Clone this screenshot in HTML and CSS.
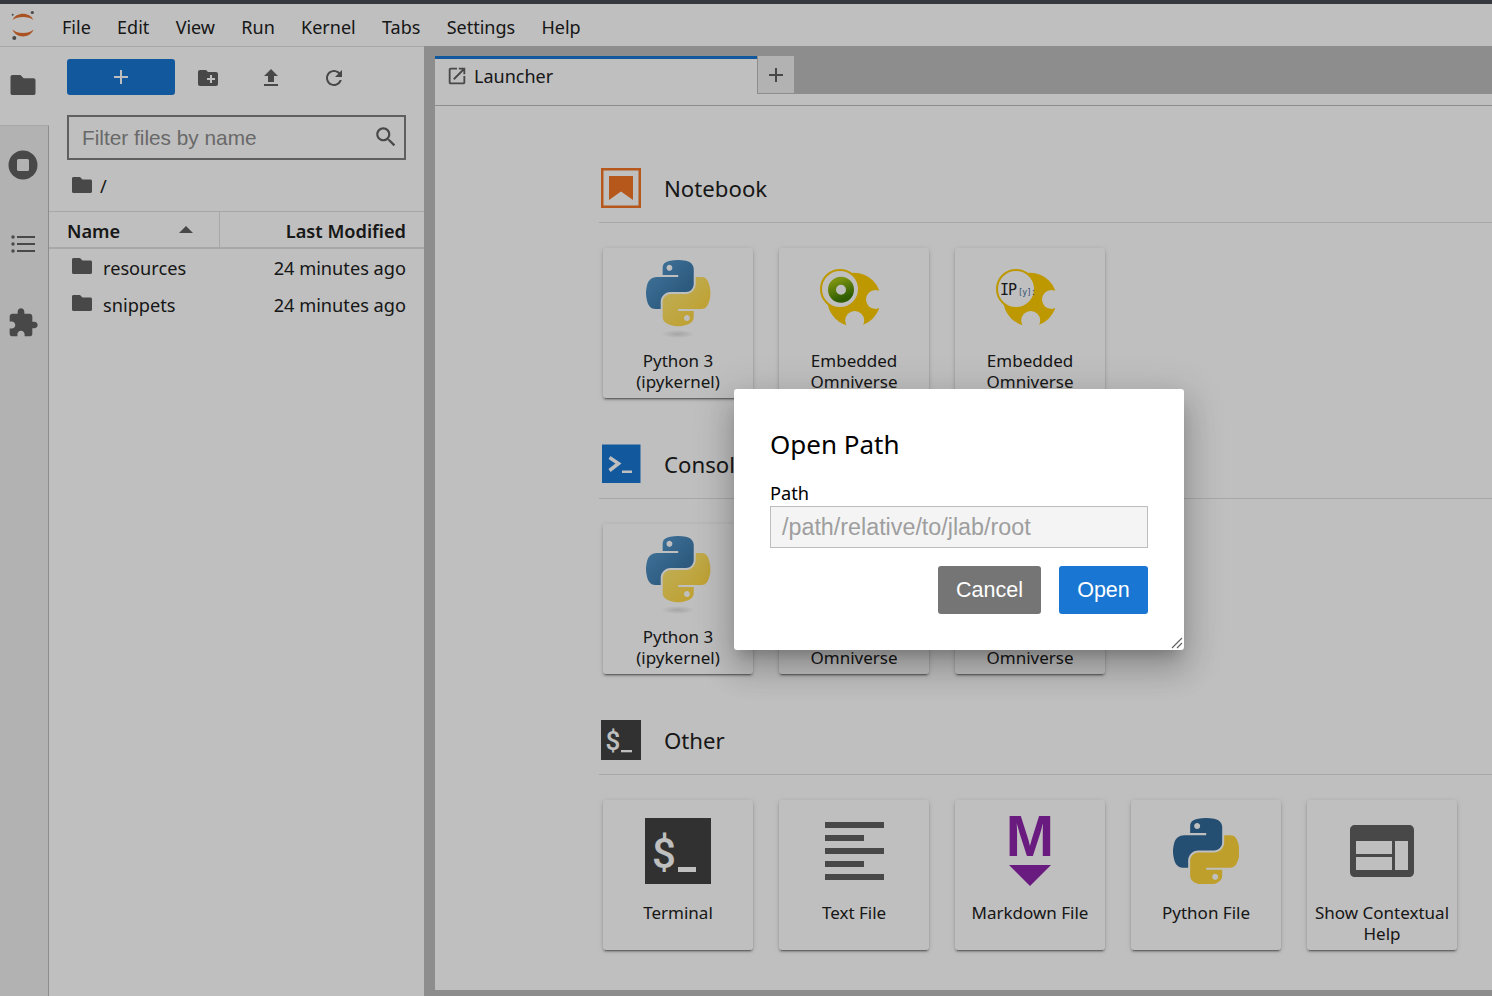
FILE: index.html
```html
<!DOCTYPE html>
<html lang="en">
<head>
<meta charset="utf-8">
<title>JupyterLab</title>
<link rel="stylesheet" href="styles.css">
</head>
<body>
<svg class="defs" aria-hidden="true">
  <defs>
    <linearGradient id="pyBlue" x1="0" y1="0" x2="1" y2="1"><stop offset="0" stop-color="#5a9fd4"/><stop offset="1" stop-color="#306998"/></linearGradient>
    <linearGradient id="pyYellow" x1="0.9" y1="0.9" x2="0.2" y2="0.1"><stop offset="0" stop-color="#ffd43b"/><stop offset="1" stop-color="#ffe873"/></linearGradient>
    <radialGradient id="pyShadow"><stop offset="0" stop-color="#dcdcdc"/><stop offset="1" stop-color="#fff"/></radialGradient>
    <linearGradient id="kitGreen" x1="0.2" y1="0" x2="0.6" y2="1"><stop offset="0" stop-color="#a4c416"/><stop offset="1" stop-color="#3f7d00"/></linearGradient>
    <symbol id="i-folder" viewBox="0 0 24 24"><path d="M10 4H3.500C2.700 4 2 4.700 2 5.500v13C2 19.300 2.700 20 3.500 20h17c.8 0 1.500-.7 1.500-1.500V8c0-.8-.7-1.500-1.500-1.500H12.500L10 4z"/></symbol>
    <symbol id="i-newfolder" viewBox="0 0 24 24"><path d="M20 6h-8l-2-2H4c-1.110 0-1.990.89-1.990 2L2 18c0 1.110.89 2 2 2h16c1.110 0 2-.89 2-2V8c0-1.110-.89-2-2-2zm-1 8h-3v3h-2v-3h-3v-2h3V9h2v3h3v2z"/></symbol>
    <symbol id="i-upload" viewBox="0 0 24 24"><path d="M9 16h6v-6h4l-7-7-7 7h4zm-4 2h14v2H5z"/></symbol>
    <symbol id="i-refresh" viewBox="0 0 24 24"><path d="M17.650 6.350C16.200 4.900 14.210 4 12 4c-4.420 0-7.990 3.580-7.990 8s3.570 8 7.990 8c3.730 0 6.840-2.550 7.730-6h-2.080c-.82 2.330-3.040 4-5.650 4-3.310 0-6-2.690-6-6s2.690-6 6-6c1.660 0 3.140.69 4.220 1.780L13 11h7V4l-2.350 2.350z"/></symbol>
    <symbol id="i-python" viewBox="0 0 110.400 110.400">
      <path fill="currentColor" d="M54.919 0C50.335.022 45.958.413 42.106 1.095 30.760 3.099 28.700 7.295 28.700 15.032v10.219h26.813v3.406H18.637c-7.792 0-14.616 4.684-16.750 13.594-2.462 10.213-2.571 16.586 0 27.250 1.906 7.938 6.458 13.594 14.250 13.594h9.219v-12.250c0-8.850 7.657-16.656 16.750-16.656h26.781c7.455 0 13.406-6.138 13.406-13.625V15.032c0-7.266-6.130-12.725-13.406-13.938C64.282.328 59.502-.020 54.919 0zm-14.500 8.220c2.770 0 5.031 2.299 5.031 5.125 0 2.816-2.261 5.094-5.031 5.094-2.779 0-5.031-2.278-5.031-5.094 0-2.826 2.252-5.125 5.031-5.125z"/>
      <path fill="var(--py2)" d="M85.638 28.657v11.906c0 9.231-7.826 17-16.750 17H42.107c-7.336 0-13.406 6.278-13.406 13.625v25.531c0 7.266 6.319 11.540 13.406 13.625 8.487 2.496 16.626 2.947 26.781 0 6.750-1.954 13.406-5.888 13.406-13.625V86.501H55.513v-3.406h40.188c7.792 0 10.696-5.435 13.406-13.594 2.799-8.399 2.740-16.476 0-27.250-1.926-7.757-5.604-13.594-13.406-13.594zM70.575 93.313c2.779 0 5.031 2.277 5.031 5.094 0 2.826-2.252 5.125-5.031 5.125-2.770 0-5.031-2.299-5.031-5.125 0-2.817 2.261-5.094 5.031-5.094z"/>
    </symbol>
    <symbol id="i-pykernel" viewBox="0 0 78 84">
      <ellipse cx="39" cy="74" rx="17" ry="4" fill="url(#pyShadow)"/>
      <g transform="translate(7 0) scale(.58 .59)">
        <path fill="url(#pyBlue)" d="M54.919 0C50.335.022 45.958.413 42.106 1.095 30.760 3.099 28.700 7.295 28.700 15.032v10.219h26.813v3.406H18.637c-7.792 0-14.616 4.684-16.750 13.594-2.462 10.213-2.571 16.586 0 27.250 1.906 7.938 6.458 13.594 14.250 13.594h9.219v-12.250c0-8.850 7.657-16.656 16.750-16.656h26.781c7.455 0 13.406-6.138 13.406-13.625V15.032c0-7.266-6.130-12.725-13.406-13.938C64.282.328 59.502-.020 54.919 0zm-14.500 8.220c2.770 0 5.031 2.299 5.031 5.125 0 2.816-2.261 5.094-5.031 5.094-2.779 0-5.031-2.278-5.031-5.094 0-2.826 2.252-5.125 5.031-5.125z"/>
        <path fill="url(#pyYellow)" d="M85.638 28.657v11.906c0 9.231-7.826 17-16.750 17H42.107c-7.336 0-13.406 6.278-13.406 13.625v25.531c0 7.266 6.319 11.540 13.406 13.625 8.487 2.496 16.626 2.947 26.781 0 6.750-1.954 13.406-5.888 13.406-13.625V86.501H55.513v-3.406h40.188c7.792 0 10.696-5.435 13.406-13.594 2.799-8.399 2.740-16.476 0-27.250-1.926-7.757-5.604-13.594-13.406-13.594zM70.575 93.313c2.779 0 5.031 2.277 5.031 5.094 0 2.826-2.252 5.125-5.031 5.125-2.770 0-5.031-2.299-5.031-5.125 0-2.817 2.261-5.094 5.031-5.094z"/>
      </g>
    </symbol>
    <symbol id="i-goldbase" viewBox="0 0 78 84">
      <circle cx="39" cy="39.500" r="26.700" fill="#fdcb00"/>
      <circle cx="60.500" cy="39.500" r="9.500" fill="#fff"/>
      <circle cx="39.700" cy="60.500" r="9.500" fill="#fff"/>
      <circle cx="25" cy="29" r="19" fill="#fff" stroke="#fdcb00" stroke-width="2"/>
    </symbol>
  </defs>
</svg>

<div class="app">
  <div class="topline"></div>
  <header class="menubar">
    <svg class="jp-logo" viewBox="0 0 26 30" width="26" height="30">
      <path fill="#e46e2e" d="M2.500 10C6 1.500 20 1.500 23.500 10 19 6 7 6 2.500 10zM2.500 19.500C6 28.800 20 28.800 23.500 19.500 19 24.200 7 24.200 2.500 19.500z"/>
      <circle cx="2.700" cy="4.800" r="1" fill="#616161"/><circle cx="22.300" cy="2.500" r="1.600" fill="#616161"/><circle cx="4.300" cy="28" r="2" fill="#616161"/>
    </svg>
    <nav class="menu">
      <span>File</span><span>Edit</span><span>View</span><span>Run</span><span>Kernel</span><span>Tabs</span><span>Settings</span><span>Help</span>
    </nav>
  </header>

  <div class="main">
    <aside class="sidetabs">
      <div class="stab active"><svg class="ic34"><use href="#i-folder"/></svg></div>
      <div class="stab">
        <svg viewBox="0 0 30 30" width="30" height="30"><circle cx="15" cy="15" r="14.500" fill="#616161"/><rect x="9" y="9" width="12" height="12" rx="1.500" fill="#eee"/></svg>
      </div>
      <div class="stab">
        <svg viewBox="0 0 24 20" width="24" height="20" fill="#616161"><circle cx="2" cy="3" r="1.700"/><circle cx="2" cy="10" r="1.700"/><circle cx="2" cy="17" r="1.700"/><rect x="6" y="2" width="18" height="2"/><rect x="6" y="9" width="18" height="2"/><rect x="6" y="16" width="18" height="2"/></svg>
      </div>
      <div class="stab">
        <svg viewBox="0 0 24 24" width="32" height="32" fill="#616161"><path d="M20.500 11H19V7c0-1.100-.9-2-2-2h-4V3.500C13 2.120 11.880 1 10.500 1S8 2.120 8 3.500V5H4c-1.100 0-1.990.9-1.990 2v3.800H3.500c1.490 0 2.700 1.210 2.700 2.700s-1.210 2.700-2.700 2.700H2V20c0 1.100.9 2 2 2h3.800v-1.500c0-1.490 1.210-2.700 2.700-2.700 1.490 0 2.700 1.210 2.700 2.700V22H17c1.100 0 2-.9 2-2v-4h1.500c1.380 0 2.500-1.120 2.500-2.500S21.880 11 20.500 11z"/></svg>
      </div>
    </aside>

    <section class="browser">
      <div class="toolbar">
        <button class="newbtn" type="button">
          <svg viewBox="0 0 16 16" width="16" height="16"><path d="M7 1h2v6h6v2H9v6H7V9H1V7h6z" fill="#fff"/></svg>
        </button>
        <svg class="tool"><use href="#i-newfolder"/></svg>
        <svg class="tool"><use href="#i-upload"/></svg>
        <svg class="tool"><use href="#i-refresh"/></svg>
      </div>
      <div class="filter">
        <span class="filter-text">Filter files by name</span>
        <svg class="filter-ic" viewBox="0 0 24 24" width="26" height="26" fill="#616161"><path d="M15.500 14h-.79l-.28-.27C15.410 12.590 16 11.110 16 9.500 16 5.910 13.090 3 9.500 3S3 5.910 3 9.500 5.910 16 9.500 16c1.610 0 3.090-.59 4.230-1.570l.27.28v.79l5 4.990L20.490 19l-4.990-5zm-6 0C7.010 14 5 11.990 5 9.500S7.010 5 9.500 5 14 7.010 14 9.500 11.990 14 9.500 14z"/></svg>
      </div>
      <div class="crumbs"><svg class="fold"><use href="#i-folder"/></svg><span>/</span></div>
      <div class="thead">
        <div class="th-name"><span>Name</span><i class="caret"></i></div>
        <div class="th-mod">Last Modified</div>
      </div>
      <div class="row"><svg class="fold"><use href="#i-folder"/></svg><span class="row-name">resources</span><span class="row-date">24 minutes ago</span></div>
      <div class="row"><svg class="fold"><use href="#i-folder"/></svg><span class="row-name">snippets</span><span class="row-date">24 minutes ago</span></div>
    </section>

    <div class="splitter"></div>

    <section class="area">
      <div class="tabbar">
        <div class="tab">
          <svg viewBox="0 0 24 24" width="22" height="22" fill="#616161"><path d="M19 19H5V5h7V3H5c-1.110 0-2 .9-2 2v14c0 1.100.89 2 2 2h14c1.100 0 2-.9 2-2v-7h-2v7zM14 3v2h3.590l-9.830 9.830 1.410 1.410L19 6.410V10h2V3h-7z"/></svg>
          <span>Launcher</span>
        </div>
        <div class="addtab"><svg viewBox="0 0 16 16" width="16" height="16"><path d="M7 1h2v6h6v2H9v6H7V9H1V7h6z" fill="#616161"/></svg></div>
      </div>
      <div class="launcher">
        <div class="sec">
          <div class="sec-head">
            <svg viewBox="0 0 40 40" width="40" height="40"><rect x="1.250" y="1.250" width="37.500" height="37.500" fill="none" stroke="#f37626" stroke-width="2.500"/><path d="M8 8h24v24l-12-8.500L8 32z" fill="#f37626"/></svg>
            <h2>Notebook</h2>
          </div>
          <div class="cards">
            <div class="card"><svg class="kicon"><use href="#i-pykernel"/></svg><p>Python 3<br>(ipykernel)</p></div>
            <div class="card">
              <svg class="kicon" viewBox="0 0 78 84"><use href="#i-goldbase" width="78" height="84"/><circle cx="26" cy="29.700" r="9" fill="none" stroke="url(#kitGreen)" stroke-width="8"/></svg>
              <p>Embedded<br>Omniverse</p>
            </div>
            <div class="card">
              <svg class="kicon" viewBox="0 0 78 84"><use href="#i-goldbase" width="78" height="84"/><text class="ip" x="9" y="35">IP</text><text class="ipy" x="27" y="34.500">[y]:</text></svg>
              <p>Embedded<br>Omniverse</p>
            </div>
          </div>
        </div>
        <div class="sec">
          <div class="sec-head">
            <svg viewBox="0 0 40 40" width="40" height="40"><rect x="1" y="0.500" width="38.500" height="38.500" fill="#1976d2"/><path d="M8.500 13.500l9 6-9 7" fill="none" stroke="#fff" stroke-width="3.500"/><rect x="21" y="26.500" width="10" height="2.500" fill="#fff"/></svg>
            <h2>Console</h2>
          </div>
          <div class="cards">
            <div class="card"><svg class="kicon"><use href="#i-pykernel"/></svg><p>Python 3<br>(ipykernel)</p></div>
            <div class="card">
              <svg class="kicon" viewBox="0 0 78 84"><use href="#i-goldbase" width="78" height="84"/></svg>
              <p>Embedded<br>Omniverse</p>
            </div>
            <div class="card">
              <svg class="kicon" viewBox="0 0 78 84"><use href="#i-goldbase" width="78" height="84"/></svg>
              <p>Embedded<br>Omniverse</p>
            </div>
          </div>
        </div>
        <div class="sec">
          <div class="sec-head">
            <svg viewBox="0 0 40 40" width="40" height="40"><rect width="40" height="40" fill="#424242"/><text class="dollar" x="4.500" y="30">$</text><rect x="20" y="30" width="11" height="2.300" fill="#fff"/></svg>
            <h2>Other</h2>
          </div>
          <div class="cards">
            <div class="card">
              <svg class="oicon" viewBox="0 0 66 66"><rect width="66" height="66" fill="#424242"/><text class="dollar big" x="7" y="50">$</text><rect x="33" y="49" width="18" height="5" fill="#fff"/></svg>
              <p>Terminal</p>
            </div>
            <div class="card">
              <svg class="oicon" viewBox="0 0 66 66" fill="#616161"><rect x="4" y="4" width="59" height="6"/><rect x="4" y="17" width="39" height="6"/><rect x="4" y="30" width="59" height="6"/><rect x="4" y="43" width="39" height="6"/><rect x="4" y="56" width="59" height="6"/></svg>
              <p>Text File</p>
            </div>
            <div class="card">
              <svg class="oicon" viewBox="0 0 66 66"><text class="mdm" x="33" y="38" text-anchor="middle">M</text><path d="M12 47h42L33 68z" fill="#8e24aa"/></svg>
              <p>Markdown File</p>
            </div>
            <div class="card">
              <svg class="oicon py-file"><use href="#i-python"/></svg>
              <p>Python File</p>
            </div>
            <div class="card">
              <svg class="oicon" viewBox="0 0 66 66"><path fill-rule="evenodd" fill="#616161" d="M6 7h54c3 0 5 2 5 5v42c0 3-2 5-5 5H6c-3 0-5-2-5-5V12c0-3 2-5 5-5zm1 16v13h36V23zm0 16v13h36V39zm39-16v29h13V23z"/></svg>
              <p>Show Contextual Help</p>
            </div>
          </div>
        </div>
      </div>
    </section>
  </div>
</div>

<div class="overlay"></div>
<div class="dialog">
  <h1>Open Path</h1>
  <label class="d-label">Path</label>
  <div class="d-input">/path/relative/to/jlab/root</div>
  <div class="d-actions">
    <button class="btn cancel" type="button">Cancel</button>
    <button class="btn open" type="button">Open</button>
  </div>
  <svg class="grip" viewBox="0 0 12 12" width="12" height="12"><path d="M1 11L11 1M6 11l5-5" stroke="#616161" stroke-width="1.200" fill="none"/></svg>
</div>
</body>
</html>
```

FILE: styles.css
```css
* { box-sizing: border-box; }
html, body { margin: 0; height: 100%; overflow: hidden; }
body { font-family: "Noto Sans", "Open Sans", sans-serif; color: #212121; background: #fff; }
.defs { position: absolute; width: 0; height: 0; }
p, h1, h2 { margin: 0; font-weight: 400; }

.app { display: flex; flex-direction: column; height: 996px; }
.topline { height: 4px; background: #474b55; flex: none; }
.menubar { height: 43px; flex: none; display: flex; align-items: center; background: #fff; border-bottom: 1px solid #e0e0e0; }
.jp-logo { margin-left: 10px; flex: none; }
.menu { display: flex; gap: 26.300px; margin: 3px 0 0 26px; font-size: 18px; }

.main { flex: 1; display: flex; min-height: 0; }
.sidetabs { width: 49px; flex: none; background: #eee; border-right: 1px solid #bdbdbd; }
.stab { height: 79px; display: flex; align-items: center; justify-content: center; padding: 0 3px 2px 0; }
.stab.active { background: #fff; width: 49px; margin-right: -1px; position: relative; border-bottom: 1px solid #e0e0e0; }
.ic34 { width: 30px; height: 30px; fill: #616161; }

.browser { width: 375px; flex: none; background: #fff; font-size: 18.200px; }
.toolbar { display: flex; align-items: center; padding: 12px 0 0 18px; height: 48px; }
.newbtn { width: 108px; height: 36px; border: 0; border-radius: 3px; background: #1976d2; display: flex; align-items: center; justify-content: center; padding: 0; }
.tool { width: 24px; height: 24px; fill: #616161; margin: 2px 0 0 21px; }
.tool + .tool { margin-left: 39px; }
.filter { margin: 20px 18px 0; height: 45px; border: 2px solid #7f7f7f; display: flex; align-items: center; justify-content: space-between; padding: 0 5px 0 13px; }
.filter-text { font-family: "Liberation Sans", Arial, sans-serif; font-size: 20.800px; color: #8c8c8c; }
.filter-ic { margin-top: -2px; }
.crumbs { display: flex; align-items: center; height: 51px; padding-left: 21px; }
.crumbs span { margin-left: 6px; }
.crumbs .fold { margin-top: -2px; }
.fold { width: 24px; height: 24px; fill: #616161; flex: none; }
.thead { display: flex; height: 38px; border-top: 1px solid #e0e0e0; border-bottom: 2px solid #e0e0e0; font-weight: 600; }
.th-name { width: 171px; padding: 3px 26px 0 18px; border-right: 1px solid #e0e0e0; display: flex; align-items: center; justify-content: space-between; }
.caret { width: 0; height: 0; border: 7px solid transparent; border-bottom: 7px solid #616161; border-top: 0; margin-top: -4px; }
.th-mod { flex: 1; display: flex; align-items: center; justify-content: flex-end; padding: 3px 18px 0 0; }
.row { display: flex; align-items: center; height: 37px; padding: 0 18px 0 21px; }
.row .fold { margin-top: -3px; }
.row-name { margin-left: 9px; flex: 1; }

.splitter { width: 11px; flex: none; background: #bdbdbd; margin-top: -1px; }
.area { flex: 1; display: flex; flex-direction: column; min-width: 0; background: #bdbdbd; padding-bottom: 6px; margin-top: -1px; }
.tabbar { height: 60px; flex: none; display: flex; align-items: flex-start; padding-top: 10px; background: linear-gradient(#bdbdbd 48px, #fff 48px); border-bottom: 1px solid #bdbdbd; }
.tab { width: 322px; height: 49px; background: #fff; border-top: 3px solid #1976d2; display: flex; align-items: center; padding: 0 0 13px 11px; font-size: 18px; gap: 6px; }
.addtab { width: 37px; height: 38px; background: #eee; border-left: 1px solid #bdbdbd; border-bottom: 1px solid #bdbdbd; display: flex; align-items: center; justify-content: center; }

.launcher { flex: 1; background: #fff; padding: 62px 0 0 164px; }
.sec + .sec { margin-top: 46px; }
.sec-head { display: flex; align-items: center; gap: 23px; padding: 0 0 14px 2px; border-bottom: 1px solid #e0e0e0; }
.sec-head h2 { font-size: 22.200px; }
.cards { display: flex; gap: 26px; padding: 25px 0 0 4px; }
.card { width: 150px; height: 150px; background: #fff; border-radius: 3px; padding-top: 12px; display: flex; flex-direction: column; align-items: center; box-shadow: 0 3px 1px -2px rgba(0,0,0,.3), 0 2px 2px rgba(0,0,0,.2), 0 1px 5px rgba(0,0,0,.15); }
.card p { margin-top: 6px; font-size: 17px; line-height: 21px; text-align: center; width: 146px; flex: none; }
.kicon { width: 78px; height: 84px; flex: none; }
.oicon { width: 66px; height: 66px; margin: 6px 0 12px; flex: none; overflow: visible; }
.py-file { color: #306998; --py2: #ffd43b; }
.ip { font-family: "DejaVu Sans Mono", monospace; font-size: 15px; letter-spacing: -1px; fill: #212121; }
.ipy { font-family: "DejaVu Sans Mono", monospace; font-size: 8px; letter-spacing: -.5px; fill: #456b9a; }
.dollar { font-family: "Roboto", sans-serif; font-weight: 500; font-size: 26px; fill: #fff; }
.dollar.big { font-size: 42px; }
.mdm { font-family: "Liberation Sans", sans-serif; font-weight: 700; font-size: 58px; fill: #8e24aa; }

.overlay { position: absolute; inset: 0; background: rgba(0,0,0,.25); }
.dialog { position: absolute; left: 734px; top: 389px; width: 450px; height: 261px; background: #fff; border-radius: 3px; padding: 36px 36px 0; box-shadow: 0 10px 13px -6px rgba(0,0,0,.2), 0 20px 31px 3px rgba(0,0,0,.14), 0 8px 38px 7px rgba(0,0,0,.12); color: #000; }
.dialog h1 { font-size: 26px; line-height: 38px; }
.d-label { display: block; margin-top: 18px; padding-bottom: 1px; font-size: 18.200px; line-height: 24px; }
.d-input { height: 42px; border: 1px solid #bdbdbd; background: #f4f4f4; padding: 0 11px; display: flex; align-items: center; font-family: "Liberation Sans", Arial, sans-serif; font-size: 23.300px; color: #9e9e9e; }
.d-actions { display: flex; justify-content: flex-end; gap: 18px; margin-top: 18px; }
.btn { height: 48px; border: 0; border-radius: 3px; color: #fff; font-family: "Liberation Sans", Arial, sans-serif; font-size: 21.500px; padding: 0; }
.cancel { width: 103px; background: #757575; }
.open { width: 89px; background: #1976d2; }
.grip { position: absolute; right: 1px; bottom: 1px; }
```
